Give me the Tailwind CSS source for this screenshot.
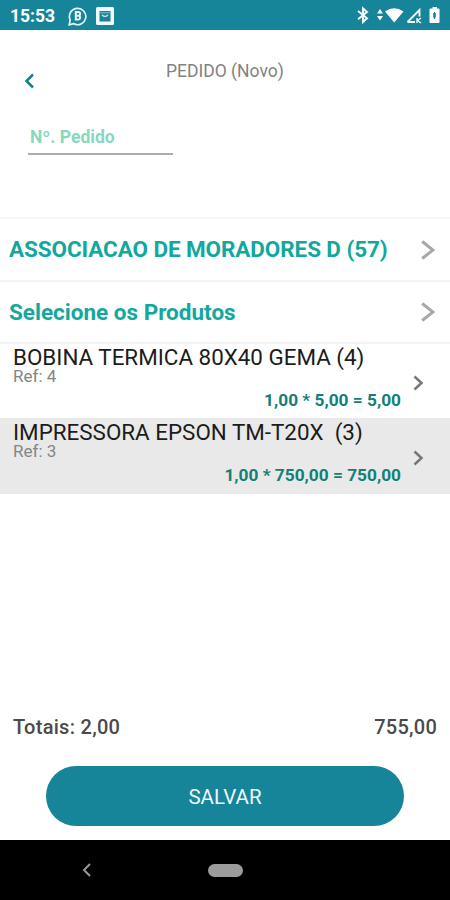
<!DOCTYPE html>
<html lang="pt-BR">
<head>
<meta charset="utf-8">
<title>Pedido</title>
<script src="https://cdn.jsdelivr.net/npm/@tailwindcss/browser@4"></script>
</head>
<body class="w-[450px] h-[900px] overflow-hidden bg-white font-['Roboto',sans-serif] flex flex-col">
<header class="h-[30px] shrink-0 bg-[#168499] flex items-center text-white pl-[10px] pr-[8px]"><span class="text-[17.500px] font-bold leading-[30px] pt-[2px] w-[58px]">15:53</span><svg class="w-[20px] h-[20px] mt-[1px]" viewBox="0 0 20 20" fill="none" stroke="#e8f4f5" stroke-width="1.7"><path d="M1.2 18.8 2.2 14A8.2 8.2 0 1 1 5.5 17.6Z"/><path d="M7.8 6v7.6h2.600a2 2 0 0 0 .3-3.900H8h2.300a1.800 1.800 0 0 0 0-3.700Z" stroke-width="2"/></svg><svg class="w-[18px] h-[18px] ml-[8px] mt-[1px]" viewBox="0 0 18 18"><rect width="18" height="18" rx="1.5" fill="#f2f9fa"/><path d="M3.500 4h11v10.500h-11Z" fill="#168499"/><path d="M3.500 5.800h11" stroke="#9fced6" stroke-width=".8"/><path d="M6 8q3 2.800 6 0" fill="none" stroke="#d5eaed" stroke-width="1.300"/></svg><svg class="w-[85px] h-[20px] ml-auto" viewBox="0 0 85 20"><g fill="none" stroke="#f2f9fa"><path d="M1 6 10 13.200 6 17V3.500L10 7 1 14.200" stroke-width="2"/><path d="M50.500 17 62.500 5v6.500M50.500 17H58M50.500 17 62.500 5" stroke-width="1.900"/><path d="M60 13v5m4-5-3.500 2.500L64 18" stroke-width="1.400"/></g><path d="M20 8.500h6l-3-4.500ZM20 11h6l-3 4.500ZM28 6.500q9-6.500 18.500 0L37.200 17.500ZM75.500 3.500V2h4.500v1.500h1.500q1 0 1 1V17q0 1-1 1h-8q-1 0-1-1V4.500q0-1 1-1Z" fill="#fff"/><path d="M77.500 7v7M76.800 8.500v3.500h1.400V8.500Z" stroke="#168499" stroke-width="1.200" fill="none"/></svg></header>
<main class="flex-1 flex flex-col">
<section class="h-[187px] shrink-0">
<div class="h-[84px] flex items-start"><svg class="w-[12px] h-[16px] ml-[23px] mt-[43px]" viewBox="0 0 12 16" fill="none" stroke="#168092" stroke-width="2.500"><path d="m10 1.500-6.500 6.500 6.500 6.500"/></svg><h1 class="ml-[131px] mt-[30px] text-[17.500px] leading-[22px] text-[#828282] font-normal">PEDIDO (Novo)</h1></div>
<div class="ml-[28px] w-[145px] h-[41px] border-b-2 border-[#a9adab] pl-[2px] pt-[12px] text-[17.500px] leading-[22px] font-bold text-[#88d7c2]">Nº. Pedido</div>
</section>
<div class="h-[63px] shrink-0 border-t-2 border-[#f6f6f6] flex items-center justify-between pl-[9px] pr-[15px] text-[#13a89d] font-bold text-[22.500px]"><span class="-tracking-[0.100px]">ASSOCIACAO DE MORADORES D (57)</span><svg class="w-[14px] h-[20px]" viewBox="0 0 14 20" fill="none" stroke="#a8a8a8" stroke-width="3"><path d="m1.200 1.500 10.800 8.500L1.200 18.500"/></svg></div>
<div class="h-[64px] shrink-0 border-y-2 border-[#f4f4f4] flex items-center justify-between pl-[9px] pr-[15px] pt-[2px] text-[#13a89d] font-bold text-[22.500px]"><span>Selecione os Produtos</span><svg class="w-[14px] h-[20px] -mt-[2px]" viewBox="0 0 14 20" fill="none" stroke="#a8a8a8" stroke-width="3"><path d="m1.200 1.500 10.800 8.500L1.200 18.500"/></svg></div>
<div class="h-[74px] shrink-0 flex justify-between pt-px pl-[13px] pr-[26px]"><div class="w-[388px] flex flex-col"><span class="text-[22.400px] leading-[24px] text-[#1c1c1c]">BOBINA TERMICA 80X40 GEMA (4)</span><span class="text-[17px] leading-[14px] text-[#858585]">Ref: 4</span><span class="mt-[6px] text-right text-[17.300px] leading-[22px] font-bold text-[#128077]">1,00 * 5,00 = 5,00</span></div><svg class="w-[11px] h-[16px] mt-[30px]" viewBox="0 0 11 16" fill="none" stroke="#777" stroke-width="2.500"><path d="m1.500 1.500 7 6.500-7 6.500"/></svg></div>
<div class="h-[76px] shrink-0 bg-[#e9e9e9] flex justify-between pl-[13px] pr-[26px]"><div class="w-[388px] flex flex-col pt-[2px]"><span class="text-[22.400px] leading-[24px] text-[#1c1c1c] whitespace-pre">IMPRESSORA EPSON TM-T20X  (3)</span><span class="text-[17px] leading-[14px] text-[#858585]">Ref: 3</span><span class="mt-[6px] text-right text-[17.300px] leading-[22px] font-bold text-[#128077]">1,00 * 750,00 = 750,00</span></div><svg class="w-[11px] h-[16px] mt-[32px]" viewBox="0 0 11 16" fill="none" stroke="#777" stroke-width="2.500"><path d="m1.500 1.500 7 6.500-7 6.500"/></svg></div>
<div class="mt-auto flex justify-between px-[13px] text-[20px] leading-[24px] font-medium text-[#4a4a4a]"><span class="tracking-[0.280px]">Totais: 2,00</span><span class="tracking-[0.250px]">755,00</span></div>
<button class="mt-[27px] mb-[14px] mx-auto w-[358px] h-[60px] pt-[2px] shrink-0 rounded-[30px] bg-[#168499] text-[20.500px] text-[#eefafb]">SALVAR</button>
</main>
<nav class="h-[60px] shrink-0 bg-black flex items-center"><svg class="w-[9px] h-[14px] ml-[82px]" viewBox="0 0 9 14" fill="none" stroke="#969696" stroke-width="2"><path d="M8 1 2 7l6 6"/></svg><div class="ml-[117px] w-[35px] h-[13px] rounded-full bg-[#9c9c9c]"></div></nav>
</body>
</html>
